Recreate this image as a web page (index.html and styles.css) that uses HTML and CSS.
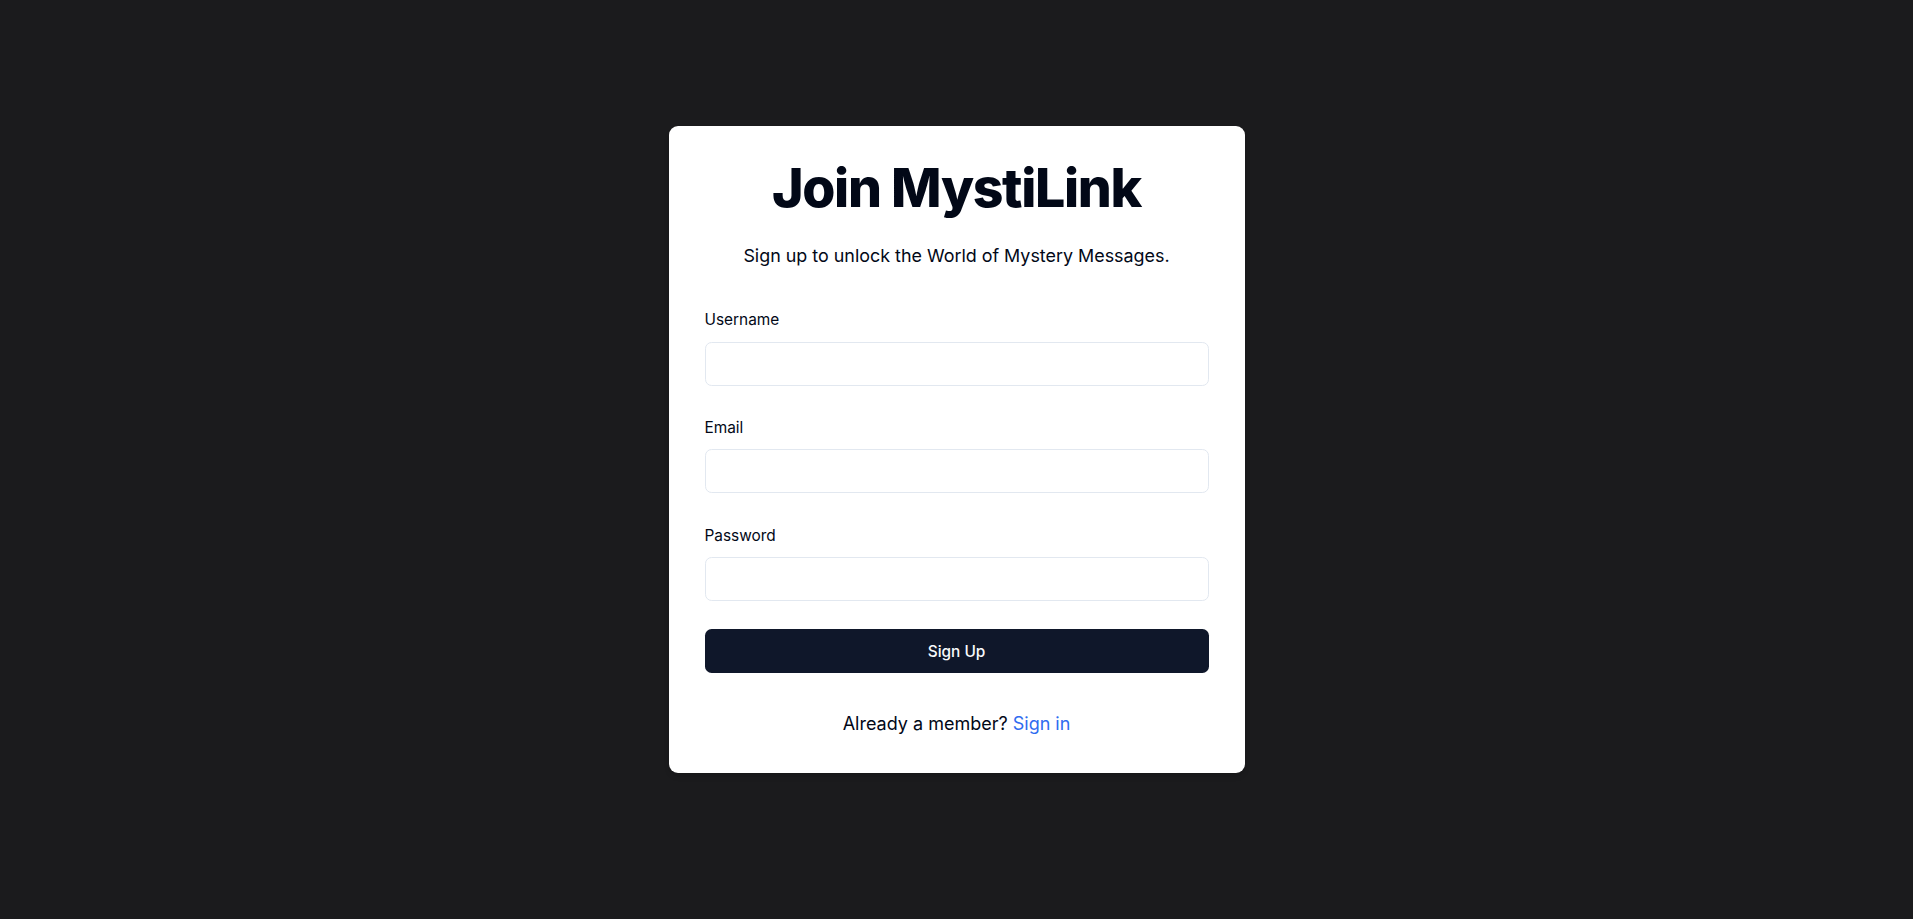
FILE: index.html
```html
<!DOCTYPE html>
<html lang="en">
<head>
<meta charset="utf-8">
<title>Join MystiLink</title>
<link rel="stylesheet" href="styles.css">
</head>
<body>
<main class="page">
  <section class="card">
    <header class="head">
      <h1 class="title">Join MystiLink</h1>
      <p class="subtitle">Sign up to unlock the World of Mystery Messages.</p>
    </header>
    <form class="form">
      <div class="field">
        <label class="label" for="username">Username</label>
        <input class="input" id="username" type="text">
      </div>
      <div class="field">
        <label class="label" for="email">Email</label>
        <input class="input" id="email" type="email">
      </div>
      <div class="field last">
        <label class="label" for="password">Password</label>
        <input class="input" id="password" type="password">
      </div>
      <button class="btn" type="button">Sign Up</button>
    </form>
    <p class="footer">Already a member? <a class="link" href="#">Sign in</a></p>
  </section>
</main>
</body>
</html>
```

FILE: styles.css
```css
* { box-sizing: border-box; }
html, body { margin: 0; padding: 0; }
body {
  background: #1b1b1d;
  font-family: Inter, "Noto Sans", "Liberation Sans", sans-serif;
  color: #020817;
}
.page {
  min-height: 100vh;
  display: flex;
  justify-content: center;
  align-items: center;
  padding-bottom: 20px;
}
.card {
  width: 576px;
  background: #ffffff;
  border-radius: 9px;
  padding: 35.5px 36px 36px 36px;
  box-shadow: 0 4px 6px -1px rgba(0,0,0,.1), 0 2px 4px -2px rgba(0,0,0,.1);
}
.head { text-align: center; }
.title {
  margin: 0 0 27.7px 0;
  font-size: 53.6px;
  line-height: 54px;
  font-weight: 800;
  letter-spacing: -0.025em;
  color: #020817;
}
.subtitle {
  margin: 0;
  font-size: 17.9px;
  line-height: 26.4px;
  color: #020817;
}
.form {
  margin-top: 39.5px;
  display: flex;
  flex-direction: column;
}
.field {
  display: flex;
  flex-direction: column;
  margin-bottom: 31.3px;
}
.field.last { margin-bottom: 28px; }
.label {
  font-size: 15.4px;
  line-height: 22px;
  font-weight: 440;
  color: #020817;
  margin-bottom: 10.7px;
}
.input {
  height: 44px;
  width: 100%;
  border: 1px solid #e2e8f0;
  border-radius: 6.6px;
  background: #ffffff;
  padding: 0 13px;
  font: inherit;
  font-size: 15.4px;
  outline: none;
}
.btn {
  height: 44px;
  width: 100%;
  border: 0;
  border-radius: 6.6px;
  background: #0f172a;
  color: #f8fafc;
  font-family: inherit;
  font-size: 15.4px;
  font-weight: 500;
  cursor: pointer;
}
.footer {
  margin: 37.4px 0 0 0;
  text-align: center;
  font-size: 18px;
  line-height: 26.4px;
  color: #020817;
}
.link {
  color: #2f6cf0;
  text-decoration: none;
}
```
